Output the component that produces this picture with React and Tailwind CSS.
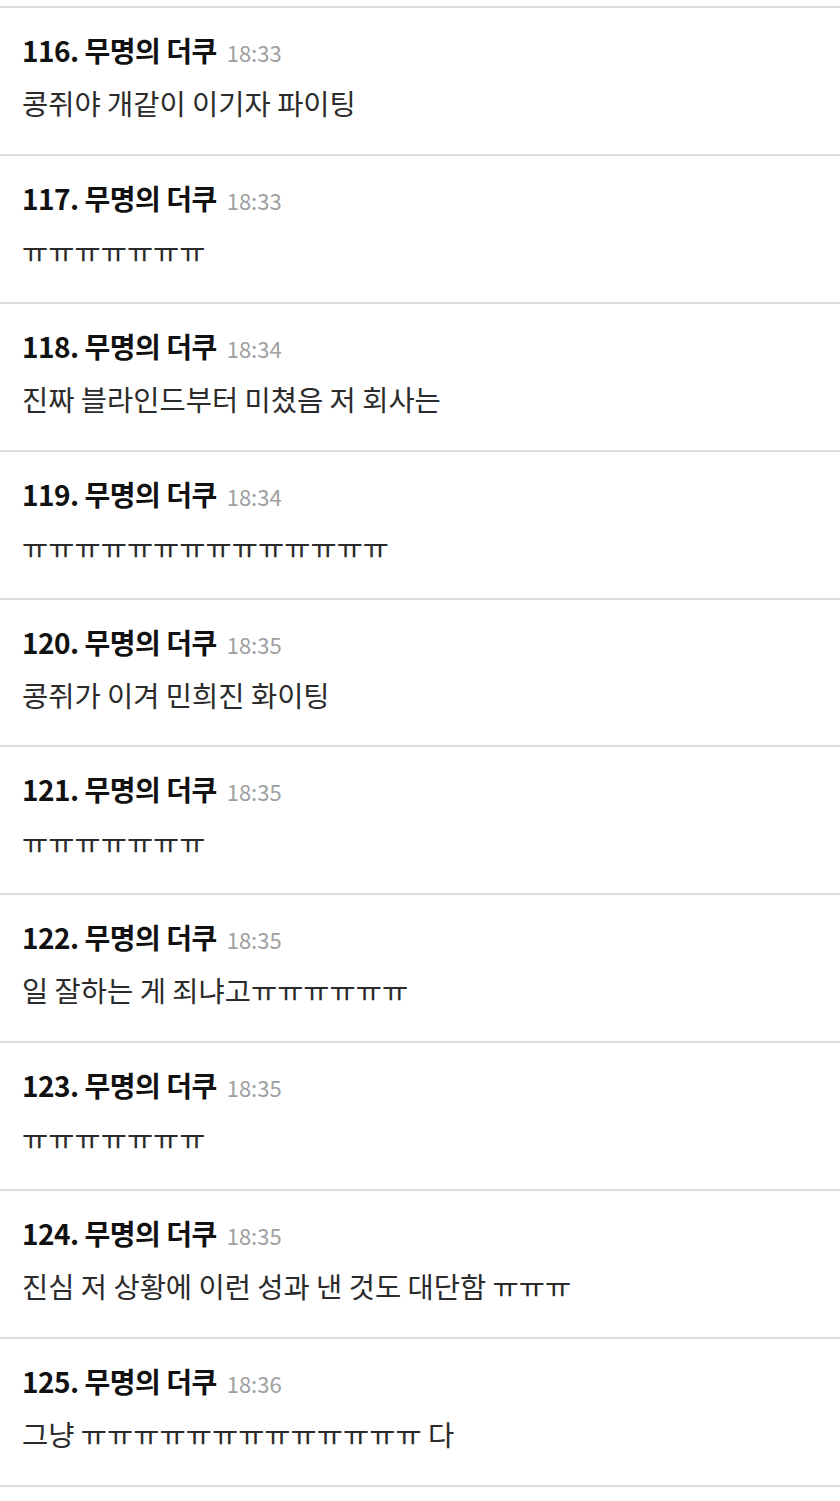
const comments = [
  { no: 116, time: '18:33', body: '콩쥐야 개같이 이기자 파이팅' },
  { no: 117, time: '18:33', body: 'ㅠ'.repeat(7) },
  { no: 118, time: '18:34', body: '진짜 블라인드부터 미쳤음 저 회사는' },
  { no: 119, time: '18:34', body: 'ㅠ'.repeat(14) },
  { no: 120, time: '18:35', body: '콩쥐가 이겨 민희진 화이팅' },
  { no: 121, time: '18:35', body: 'ㅠ'.repeat(7) },
  { no: 122, time: '18:35', body: '일 잘하는 게 죄냐고' + 'ㅠ'.repeat(6) },
  { no: 123, time: '18:35', body: 'ㅠ'.repeat(7) },
  { no: 124, time: '18:35', body: '진심 저 상황에 이런 성과 낸 것도 대단함 ㅠㅠㅠ' },
  { no: 125, time: '18:36', body: '그냥 ' + 'ㅠ'.repeat(13) + ' 다' },
];

const Comment = ({ no, time, body }) => (
  <div className="h-[147.9px] border-b-2 border-[#dcdcdc] pl-[22px] pt-[24px] flex flex-col">
    <div className="flex items-baseline h-[36px] leading-[36px]">
      <span className="text-[28px] font-bold tracking-[-0.5px] text-[#111]">
        {no}. 무명의 더쿠
      </span>
      <span className="ml-[10px] text-[22px] text-[#a0a0a0]">{time}</span>
    </div>
    <div className="mt-[17px] h-[36px] leading-[36px] text-[28.5px] text-[#2b2b2b] whitespace-pre">
      {body}
    </div>
  </div>
);

export default function App() {
  return (
    <div
      className="w-[840px] min-h-[1501px] bg-white pt-[6px]"
      style={{ fontFamily: '"Noto Sans CJK KR", "Noto Sans", sans-serif' }}
    >
      <div className="border-t-2 border-[#dcdcdc]">
        {comments.map(c => (
          <Comment key={c.no} {...c} />
        ))}
      </div>
    </div>
  );
}
